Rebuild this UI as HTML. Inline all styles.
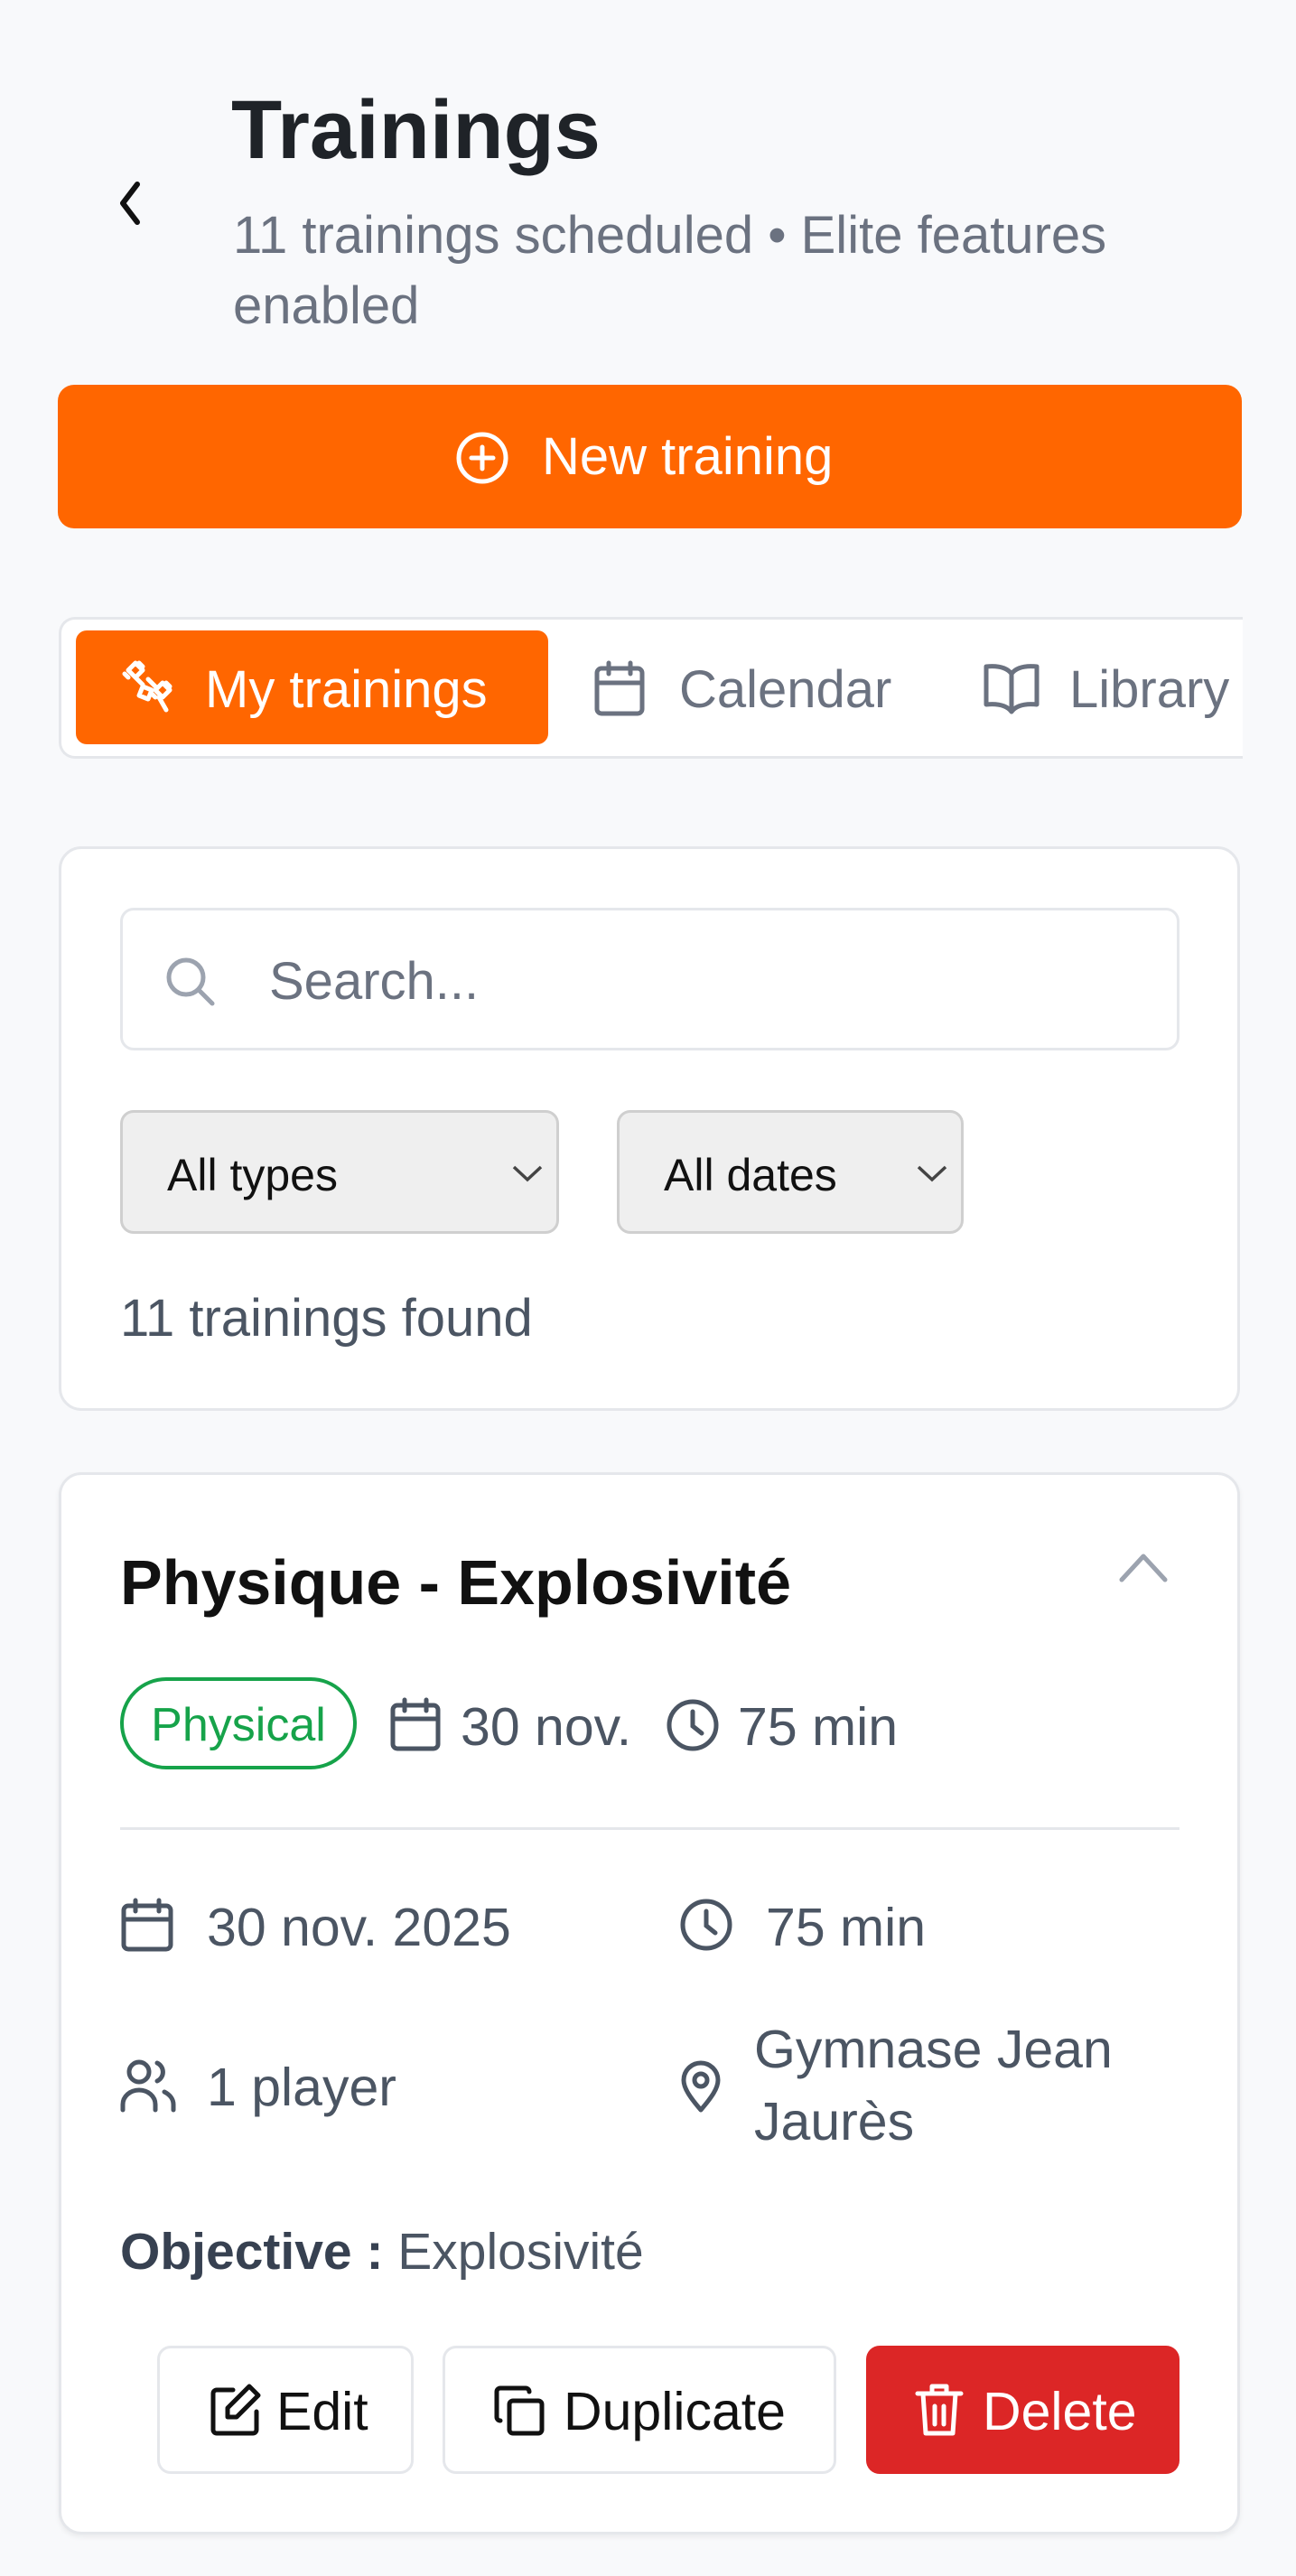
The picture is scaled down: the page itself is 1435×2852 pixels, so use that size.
<!DOCTYPE html>
<html><head><meta charset="utf-8"><style>
*{box-sizing:border-box;margin:0;padding:0}
body{width:1435px;height:2852px;background:#f8f9fb;font-family:"Liberation Sans",sans-serif;position:relative;overflow:hidden;color:#111}
.a{position:absolute}
svg{display:block}
.t{white-space:nowrap;line-height:1}
</style></head><body>

<svg class="a" style="left:124px;top:198px" width="40" height="54" viewBox="0 0 40 54"><path d="M28 6 L12 27 L28 48" fill="none" stroke="#111" stroke-width="6" stroke-linecap="round" stroke-linejoin="round"/></svg>
<div class="a t" style="left:256px;top:98px;font-size:92px;font-weight:bold;color:#1f2328">Trainings</div>
<div class="a" style="left:258px;top:222px;width:1100px;font-size:58px;line-height:78px;color:#6b7280">11 trainings scheduled • Elite features<br>enabled</div>

<div class="a" style="left:64px;top:426px;width:1311px;height:159px;background:#ff6600;border-radius:18px"></div>
<svg class="a" style="left:504px;top:477px" width="60" height="60" viewBox="0 0 60 60"><circle cx="30" cy="30" r="26" fill="none" stroke="#fff" stroke-width="5"/><path d="M30 18v24M18 30h24" stroke="#fff" stroke-width="5" stroke-linecap="round"/></svg>
<div class="a t" style="left:600px;top:477px;font-size:58px;color:#fff">New training</div>

<div class="a" style="left:65px;top:683px;width:1330px;height:157px;background:#fff;border:3px solid #e5e7eb;border-right:none;border-radius:18px 0 0 18px"></div>
<div class="a" style="left:1376px;top:680px;width:60px;height:165px;background:#f8f9fb"></div>
<div class="a" style="left:84px;top:698px;width:523px;height:126px;background:#ff6600;border-radius:12px"></div>
<svg class="a" style="left:134px;top:730px" width="62" height="64" viewBox="0 0 62 64" fill="none" stroke="#fff" stroke-width="5" stroke-linecap="round" stroke-linejoin="round"><path d="M8 12l8-8 8 8-8 8zM4 16l4 4M20 4l4 4M16 20l8 8M30 22l8 8M38 34l8-8 8 8-8 8zM34 38l4 4M50 26l4 4M42 42l8 14M24 30l10 4-4 10-10-4z"/></svg>
<div class="a t" style="left:227px;top:735px;font-size:58px;color:#fff">My trainings</div>
<svg class="a" style="left:656px;top:730px" width="60" height="64" viewBox="0 0 60 64" fill="none" stroke="#6b7280" stroke-width="5" stroke-linecap="round" stroke-linejoin="round"><rect x="5" y="10" width="50" height="50" rx="5"/><path d="M5 26h50M18 4v12M42 4v12"/></svg>
<div class="a t" style="left:752px;top:735px;font-size:58px;color:#6b7280">Calendar</div>
<svg class="a" style="left:1088px;top:732px" width="64" height="60" viewBox="0 0 64 60" fill="none" stroke="#6b7280" stroke-width="5" stroke-linejoin="round"><path d="M32 14C26 6 14 5 4 6v42c10-1 22 0 28 8 6-8 18-9 28-8V6C50 5 38 6 32 14zM32 14v42"/></svg>
<div class="a t" style="left:1184px;top:735px;font-size:58px;color:#6b7280">Library</div>

<div class="a" style="left:65px;top:937px;width:1308px;height:625px;background:#fff;border:3px solid #e5e7eb;border-radius:25px"></div>
<div class="a" style="left:133px;top:1005px;width:1173px;height:158px;background:#fff;border:3px solid #e5e7eb;border-radius:15px"></div>
<svg class="a" style="left:182px;top:1058px" width="58" height="58" viewBox="0 0 58 58" fill="none" stroke="#9ca3af" stroke-width="5" stroke-linecap="round"><circle cx="24" cy="24" r="19"/><path d="M38 38l15 15"/></svg>
<div class="a t" style="left:298px;top:1058px;font-size:58px;color:#6b7280">Search...</div>

<div class="a" style="left:133px;top:1229px;width:486px;height:137px;background:#efefef;border:3px solid #cfcfcf;border-radius:15px"></div>
<div class="a t" style="left:185px;top:1276px;font-size:50px;color:#111">All types</div>
<svg class="a" style="left:566px;top:1288px" width="36" height="22" viewBox="0 0 36 22"><path d="M3 4l15 14L33 4" fill="none" stroke="#444" stroke-width="3.5"/></svg>
<div class="a" style="left:683px;top:1229px;width:384px;height:137px;background:#efefef;border:3px solid #cfcfcf;border-radius:15px"></div>
<div class="a t" style="left:735px;top:1276px;font-size:50px;color:#111">All dates</div>
<svg class="a" style="left:1014px;top:1288px" width="36" height="22" viewBox="0 0 36 22"><path d="M3 4l15 14L33 4" fill="none" stroke="#444" stroke-width="3.5"/></svg>
<div class="a t" style="left:133px;top:1431px;font-size:58px;color:#4b5563">11 trainings found</div>

<div class="a" style="left:65px;top:1630px;width:1308px;height:1176px;background:#fff;border:3px solid #e5e7eb;border-radius:25px;box-shadow:0 3px 6px rgba(0,0,0,.06)"></div>
<div class="a t" style="left:133px;top:1717px;font-size:70px;font-weight:bold;color:#111">Physique - Explosivité</div>
<svg class="a" style="left:1238px;top:1715px" width="56" height="40" viewBox="0 0 56 40"><path d="M4 34L28 8l24 26" fill="none" stroke="#9ca3af" stroke-width="5" stroke-linecap="round" stroke-linejoin="round"/></svg>

<div class="a" style="left:133px;top:1857px;width:262px;height:102px;border:4px solid #16a34a;border-radius:51px"></div>
<div class="a t" style="left:133px;top:1884px;width:262px;text-align:center;font-size:52px;color:#16a34a">Physical</div>
<svg class="a" style="left:430px;top:1878px" width="60" height="62" viewBox="0 0 60 62" fill="none" stroke="#4b5563" stroke-width="5" stroke-linecap="round"><rect x="5" y="10" width="50" height="48" rx="5"/><path d="M5 25h50M18 4v12M42 4v12"/></svg>
<div class="a t" style="left:510px;top:1883px;font-size:59px;color:#4b5563">30 nov.</div>
<svg class="a" style="left:736px;top:1879px" width="62" height="62" viewBox="0 0 62 62" fill="none" stroke="#4b5563" stroke-width="5" stroke-linecap="round"><circle cx="31" cy="31" r="26"/><path d="M31 16v16l10 8"/></svg>
<div class="a t" style="left:817px;top:1883px;font-size:59px;color:#4b5563">75 min</div>

<div class="a" style="left:133px;top:2023px;width:1173px;height:3px;background:#e5e7eb"></div>

<svg class="a" style="left:132px;top:2100px" width="62" height="62" viewBox="0 0 62 62" fill="none" stroke="#4b5563" stroke-width="5" stroke-linecap="round"><rect x="5" y="10" width="52" height="48" rx="5"/><path d="M5 25h52M18 4v12M44 4v12"/></svg>
<div class="a t" style="left:229px;top:2105px;font-size:59px;color:#4b5563">30 nov. 2025</div>
<svg class="a" style="left:751px;top:2100px" width="62" height="62" viewBox="0 0 62 62" fill="none" stroke="#4b5563" stroke-width="5" stroke-linecap="round"><circle cx="31" cy="31" r="26"/><path d="M31 16v16l10 8"/></svg>
<div class="a t" style="left:848px;top:2105px;font-size:59px;color:#4b5563">75 min</div>

<svg class="a" style="left:132px;top:2278px" width="64" height="62" viewBox="0 0 64 62" fill="none" stroke="#4b5563" stroke-width="5" stroke-linecap="round"><circle cx="22" cy="16" r="11"/><path d="M4 58v-6c0-9 8-16 18-16s18 7 18 16v6M42 6a11 11 0 0 1 0 20M50 38c6 3 10 8 10 14v6"/></svg>
<div class="a t" style="left:229px;top:2282px;font-size:59px;color:#4b5563">1 player</div>
<svg class="a" style="left:752px;top:2280px" width="48" height="60" viewBox="0 0 48 60" fill="none" stroke="#4b5563" stroke-width="5" stroke-linecap="round" stroke-linejoin="round"><path d="M24 56C12 42 5 32 5 23a19 19 0 0 1 38 0c0 9-7 19-19 33z"/><circle cx="24" cy="23" r="7"/></svg>
<div class="a" style="left:835px;top:2229px;font-size:59px;line-height:80px;color:#4b5563">Gymnase Jean<br>Jaurès</div>

<div class="a t" style="left:133px;top:2465px;font-size:57px;color:#4b5563"><b style="color:#374151">Objective :</b> Explosivité</div>

<div class="a" style="left:174px;top:2597px;width:284px;height:142px;background:#fff;border:3px solid #e5e7eb;border-radius:15px"></div>
<svg class="a" style="left:230px;top:2638px" width="60" height="60" viewBox="0 0 60 60" fill="none" stroke="#111" stroke-width="5" stroke-linecap="round" stroke-linejoin="round"><path d="M28 8H10a4 4 0 0 0-4 4v40a4 4 0 0 0 4 4h40a4 4 0 0 0 4-4V32"/><path d="M46 4l10 10-24 24H22V28z"/></svg>
<div class="a t" style="left:306px;top:2641px;font-size:59px;color:#111">Edit</div>
<div class="a" style="left:490px;top:2597px;width:436px;height:142px;background:#fff;border:3px solid #e5e7eb;border-radius:15px"></div>
<svg class="a" style="left:544px;top:2638px" width="62" height="62" viewBox="0 0 62 62" fill="none" stroke="#111" stroke-width="5" stroke-linecap="round" stroke-linejoin="round"><rect x="20" y="20" width="36" height="36" rx="4"/><path d="M10 42a4 4 0 0 1-4-4V10a4 4 0 0 1 4-4h28a4 4 0 0 1 4 4"/></svg>
<div class="a t" style="left:624px;top:2641px;font-size:59px;color:#111">Duplicate</div>
<div class="a" style="left:959px;top:2597px;width:347px;height:142px;background:#dc2626;border-radius:15px"></div>
<svg class="a" style="left:1012px;top:2636px" width="56" height="64" viewBox="0 0 56 64" fill="none" stroke="#fff" stroke-width="5" stroke-linecap="round" stroke-linejoin="round"><path d="M4 14h48M20 14V6h16v8M10 14l3 44h30l3-44M23 28v20M33 28v20"/></svg>
<div class="a t" style="left:1088px;top:2641px;font-size:59px;color:#fff">Delete</div>

</body></html>
